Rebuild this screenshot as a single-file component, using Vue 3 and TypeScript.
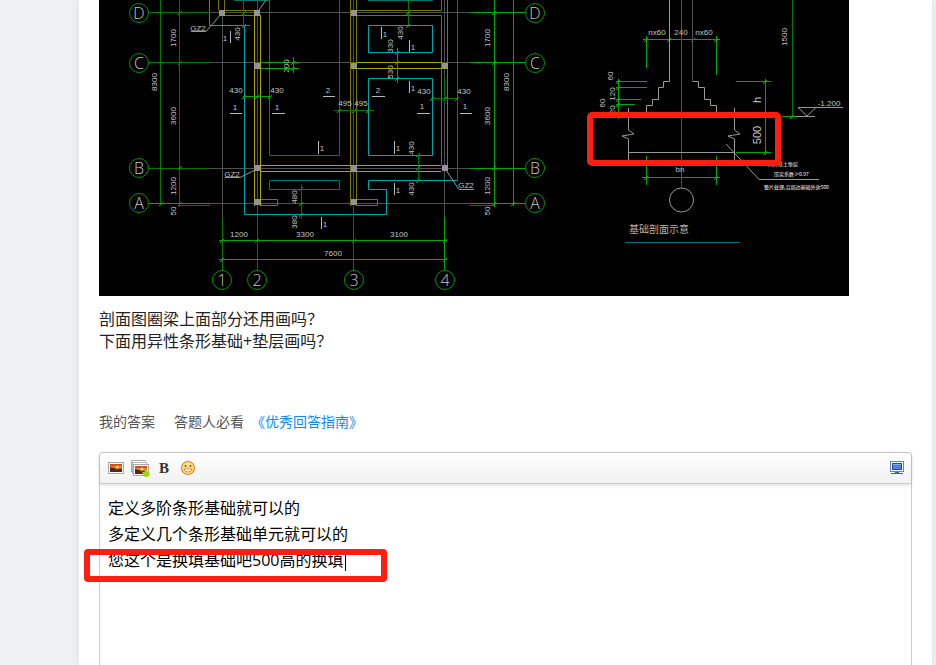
<script setup lang="ts">
import { ref } from 'vue'

type Label = [text: string, x: number, y: number]

const answer = ref('定义多阶条形基础就可以的\n多定义几个条形基础单元就可以的\n您这个是换填基础吧500高的换填')

const axisBubbles: Label[] = [
  ['D', 139, 13], ['C', 139, 63], ['B', 139, 168], ['A', 139, 203],
  ['D', 535, 13], ['C', 535, 63], ['B', 535, 168], ['A', 535, 203],
  ['1', 222, 280], ['2', 257, 280], ['3', 354, 280], ['4', 445, 280],
]

const columns: [number, number][] = [
  [222, 13], [257, 13], [354, 13], [257, 66], [354, 66], [445, 66],
  [257, 168], [354, 168], [445, 168], [257, 202], [354, 202],
]

const labels: Label[] = [
  ['1200', 239, 234], ['3300', 305, 234], ['3100', 399, 234], ['7600', 333, 253],
  ['GZ2', 198, 28], ['GZ2', 232, 174], ['GZ2', 466, 185],
  ['1', 225, 38], ['430', 236, 90], ['430', 277, 90], ['1', 235, 107], ['1', 277, 107],
  ['2', 328, 90], ['2', 378, 90], ['495', 345, 103], ['495', 361, 103],
  ['430', 424, 91], ['430', 464, 91], ['1', 422, 106], ['1', 465, 106],
  ['1', 385, 34], ['1', 413, 47], ['1', 413, 88], ['1', 322, 148], ['1', 398, 148],
  ['1', 398, 190], ['1', 325, 224],
  ['nx60', 657, 32], ['240', 681, 32], ['nx60', 704, 32], ['-1.200', 829, 103], ['bn', 680, 169],
]

const turnedLabels: Label[] = [
  ['1700', 173, 38], ['8300', 154, 82], ['3600', 173, 116], ['1200', 173, 186], ['50', 173, 211],
  ['1700', 487, 38], ['8300', 506, 82], ['3600', 487, 116], ['1200', 487, 186], ['50', 487, 211],
  ['430', 237, 34], ['200', 286, 66], ['430', 400, 33], ['330', 390, 46], ['530', 390, 72],
  ['430', 411, 148], ['430', 411, 189], ['480', 294, 197], ['380', 294, 222],
  ['60', 610, 76], ['120', 612, 94], ['60', 602, 103], ['120', 612, 112],
  ['1500', 784, 37],
]

const ticks: [number, number][] = [
  [180, 13], [180, 63], [180, 168], [180, 204], [161, 204],
  [494, 13], [494, 63], [494, 168], [494, 204], [513, 204],
  [222, 241], [257, 241], [354, 241], [445, 241], [222, 260], [445, 260],
  [244, 13], [244, 26], [244, 97], [257, 97], [270, 97], [293, 63], [293, 69],
  [339, 111], [354, 111], [368, 111], [432, 99], [445, 99], [457, 99],
  [397, 53], [397, 63], [397, 79], [408, 13], [408, 26], [418, 155], [418, 168], [418, 181],
  [301, 189], [301, 204], [301, 215],
  [646, 40], [669, 40], [693, 40], [716, 40], [618, 82], [618, 88], [618, 100], [618, 105],
  [765, 82], [765, 153], [792, 117], [646, 178], [716, 178],
]
</script>

<template>
  <main class="card">
    <svg class="drawing" viewBox="99 0 750 296" role="img" aria-label="基础平面图与基础剖面示意">
      <rect class="sheet" x="99" y="0" width="750" height="296" />

      <path class="axis" d="M210 12.5H470M210 62.5H470M210 168.5H470M210 203.5H470M222.500 13V217M257.500 0V217M353.500 0V217M444.500 0V217" />

      <path class="teal" d="M269.500 0V155.500H339.500V0M234 .5H270M368 .5H433M269.500 180.500H339.500V189.500H269.500ZM457.500 0V180.500" />
      <path class="cyan" d="M209.500 0V25.500H244.500V214.500H386.500V189.500H368.500V180.500H457.500M368.500 25.500H432.500V52.500H368.500ZM368.500 78.500H432.500V155.500H368.500Z" />

      <path class="wall" d="M218.500 0V10M224.500 0V10.500H254M224 15.500H254M254.500 15V206M260.500 15V206M350.500 0V206M356.500 0V206M441.500 0V10.500H357M357 15.500H441.500V165M447.500 0V165M261 165.500H441M261 171.500H441M261 199.500H277.500V205.500H261M357 199.500H377.500V205.500H357" />
      <path class="wall bright" d="M357 62.500H442M357 68.500H442M254.500 15V206M260.500 15V206M261 165.500H441M261 171.500H441" />

      <path class="green dim" d="M149 12.500H210M149 62.500H210M149 168.500H210M180 205.500H210M160.500 0V205M179.500 0V207M222.500 217V270M257.500 217V270M353.500 189V270M243.500 0V27M408.500 0V27M418.500 154V182M301.500 184V219M257.500 92V101M353.500 94V115M334 110.500H374M431 98.500H458M444.500 77V104M470 205.500H495M792.500 0V118" />
      <path class="green" d="M149 203.500H210M470 12.500H526M470 62.500H526M470 168.500H526M470 203.500H526M494.500 0V207M513.500 0V206M219 240.500H447M219 259.500H447M444.500 217V270M244 25.500H250M261 62.500H299M261 68.500H299M293.500 57V73M243 96.500H271M397.500 48V83" />
      <path class="green" d="M643 39.500H720M646.500 36V68M716.500 36V75M618.500 79V119M616 81.500H647M616 87.500H647M616 99.500H641M616 104.500H635M765.500 79V155M736 81.500H771M736 152.500H771M782 116.500H795M646.500 156V185M716.500 156V185M642 177.500H720" />
      <path v-for="([x, y], i) in ticks" :key="`t${i}`" class="green" :d="`M${x - 2} ${y + 2}L${x + 2} ${y - 2}`" />

      <path class="white" d="M230 113.500H242M272 113.500H285M323 96.500H335M372 96.500H385M417 113.500H430M460 113.500H472M381.500 27V39M409.500 40V52M409.500 81V93M318.500 141V154M394.500 141V154M394.500 183V195M321.500 217V229M230.500 31V43" />
      <path class="leader" d="M191 31.500H206L222 13M257 13L266 0M225 177.500H240L257 169M474 189.500H459L446 170" />

      <path class="axis" d="M681.500 0V188M692.500 0V81" />
      <path class="section" d="M669.500 0V81.500H663.500V87.500H658.500V99.500H652.500V105.500H646.500V114M692.500 81.500H698.500V87.500H704.500V99.500H710.500V105.500H716.500V114" />
      <path class="section" d="M628.500 108V130L634 134L622 136L628.500 139V160M734.500 108V130L740 134L728 136L734.500 139V160M628 152.500H735M726 144L759 179.500H819M798 107.500H843M798 107.500L807 116L816 107.500M795 116.500H815" />
      <circle class="section" cx="681.500" cy="200" r="12" />
      <path class="teal title-rule" d="M625 242.500H740" />

      <rect v-for="([x, y], i) in columns" :key="`c${i}`" class="column" :x="x - 3" :y="y - 3" width="6" height="6" />

      <g v-for="([text, x, y], i) in axisBubbles" :key="`b${i}`">
        <circle class="green bubble" :cx="x" :cy="y" r="9.500" />
        <text class="bubble-text" :x="x" :y="y + 6">{{ text }}</text>
      </g>
      <text v-for="([text, x, y], i) in labels" :key="`l${i}`" class="label" :x="x" :y="y + 3">{{ text }}</text>
      <text
        v-for="([text, x, y], i) in turnedLabels"
        :key="`r${i}`"
        class="label"
        :x="x"
        :y="y + 3"
        :transform="`rotate(-90 ${x} ${y})`"
      >{{ text }}</text>
      <text class="label large" x="757" y="104" transform="rotate(-90 757 100)">h</text>
      <text class="label large" x="757" y="139" transform="rotate(-90 757 135)">500</text>

      <text class="note" x="768" y="166">大开挖土垫层</text>
      <text class="note" x="774" y="176">压实系数≥0.97</text>
      <text class="note" x="764" y="189">整片处理,沿周边基础外放500</text>
      <text class="title" x="629" y="233">基础剖面示意</text>

      <rect class="mark" x="590" y="115" width="188" height="48" rx="2" />
    </svg>

    <p class="question">剖面图圈梁上面部分还用画吗？<br />下面用异性条形基础+垫层画吗？</p>

    <div class="meta">
      <label for="answer">我的答案</label>
      <span class="must">答题人必看</span>
      <a href="#guide">《优秀回答指南》</a>
    </div>

    <section class="editor">
      <div class="toolbar">
        <button type="button" aria-label="插入图片">
          <svg width="16" height="12" viewBox="0 0 16 12">
            <rect x=".5" y=".5" width="15" height="11" fill="#fff" stroke="#a9a9a9" />
            <rect x="2" y="2" width="12" height="8" fill="#c9541b" />
            <path d="M2 4H14V6H2Z" fill="#e9822b" />
            <circle cx="9.500" cy="5" r="1.500" fill="#ffd872" />
            <path d="M2 5L6 6L8 7.500L14 7V10H2Z" fill="#5d2714" />
          </svg>
        </button>
        <button type="button" aria-label="批量插入图片">
          <svg width="20" height="18" viewBox="0 0 20 18">
            <path d="M1.500 13V1.500H16" fill="#fff" stroke="#aaa" />
            <rect x="2.500" y="3.500" width="14" height="11" fill="#fff" stroke="#b4b4b4" />
            <rect x="3.500" y="5.500" width="15" height="11" fill="#fff" stroke="#a9a9a9" />
            <rect x="5" y="7" width="12" height="8" fill="#c9541b" />
            <path d="M5 9H17V11H5Z" fill="#e9822b" />
            <circle cx="12" cy="10" r="1.500" fill="#ffd872" />
            <path d="M5 10L9 11L11 12.500L17 12V15H5Z" fill="#5d2714" />
            <path d="M14.500 11H17.500V13H19.500V16H17.500V18H14.500V16H12.500V13H14.500Z" fill="#9bd321" />
          </svg>
        </button>
        <button type="button" class="bold" aria-label="加粗">B</button>
        <button type="button" aria-label="表情">
          <svg width="16" height="16" viewBox="0 0 16 16">
            <circle cx="8" cy="8" r="6.500" fill="#ffdf8c" stroke="#d98a25" stroke-width="1.200" />
            <circle cx="5.500" cy="6" r="1" fill="#a34f0c" />
            <circle cx="10.500" cy="6" r="1" fill="#a34f0c" />
            <path d="M4 9H12Q11.500 12 8 12T4 9Z" fill="#fff" stroke="#c2752a" stroke-width=".8" />
          </svg>
        </button>
        <button type="button" class="screen" aria-label="全屏">
          <svg width="14" height="14" viewBox="0 0 14 14">
            <rect x=".5" y=".5" width="13" height="10" fill="#fff" stroke="#6a82b3" />
            <rect x="2" y="2" width="10" height="7" fill="#23479d" />
            <rect x="3" y="3" width="8" height="5" fill="#4d80e4" />
            <path d="M3 3H11V4H3Z" fill="#8caef4" />
            <path d="M5 11H9V12H5ZM1 12H13V13H1Z" fill="#4b5f96" />
          </svg>
        </button>
      </div>
      <textarea id="answer" v-model="answer" spellcheck="false"></textarea>
      <span class="caret"></span>
      <span class="highlight"></span>
    </section>
  </main>
</template>

<style>
body {
  background: #eff0f3;
}
</style>

<style scoped>
.card {
  display: flex;
  flex-direction: column;
  box-sizing: border-box;
  min-height: 100vh;
  margin: 0 4px 0 79px;
  padding: 0 20px;
  background: #fff;
  box-shadow: 0 0 8px rgba(0, 0, 0, 0.08);
  color: #222;
  font-family: "Open Sans", "Noto Sans CJK SC", sans-serif;
}

.drawing {
  display: block;
  width: 100%;
  max-width: 750px;
}

.drawing path,
.drawing circle {
  fill: none;
}

.axis { stroke: #505050; }
.teal { stroke: #007474; }
.cyan { stroke: #00a5ad; }
.wall { stroke: #777500; }
.wall.bright { stroke: #aaa700; }
.green { stroke: #00a800; }
.green.dim { stroke: #007800; }
.green.bubble { stroke: #009500; }
.white { stroke: #b8b8b8; }
.leader { stroke: #999; }
.section { stroke: #999; }
.column { fill: #969296; }

.label,
.bubble-text {
  fill: #c4c4c4;
  font-family: "Liberation Sans", sans-serif;
  font-size: 8px;
  text-anchor: middle;
}

.label.large {
  font-size: 11px;
}

.bubble-text {
  font-family: "Open Sans", sans-serif;
  font-size: 16px;
  font-weight: 300;
}

.note,
.title {
  fill: #fff;
  font-family: "Noto Sans CJK SC", sans-serif;
  font-size: 5px;
}

.title {
  fill: #b4b4b4;
  font-size: 10px;
}

.mark {
  fill: none;
  stroke: #ff1e10;
  stroke-width: 6px;
}

.question {
  margin: 12px 0 0;
  font-size: 16px;
  line-height: 22px;
}

.meta {
  display: flex;
  margin: 60px 0 20px;
  color: #555;
  font-size: 14px;
  line-height: 20px;
}

.must {
  margin: 0 7px 0 19px;
}

.meta a {
  color: #1188fa;
  text-decoration: none;
}

.editor {
  position: relative;
  display: flex;
  flex: 1;
  flex-direction: column;
  border: 1px solid #ccc;
  border-bottom: 0;
  border-radius: 4px 4px 0 0;
}

.toolbar {
  display: flex;
  align-items: center;
  height: 30px;
  padding: 0 2px 0 4px;
  border-bottom: 1px solid #ccc;
  border-radius: 3px 3px 0 0;
  background: linear-gradient(#fff, #f1f1f1);
  box-shadow: 0 1px 4px rgba(0, 0, 0, 0.16);
}

.toolbar button {
  display: flex;
  align-items: center;
  justify-content: center;
  width: 24px;
  height: 24px;
  padding: 0;
  border: 0;
  background: none;
}

.toolbar .bold {
  color: #333;
  font: bold 15px "Liberation Serif", serif;
}

.toolbar .screen {
  margin-left: auto;
}

textarea {
  box-sizing: border-box;
  flex: 1;
  width: 100%;
  min-height: 180px;
  padding: 11px 8px 0;
  border: 0;
  outline: 0;
  resize: none;
  background: none;
  color: #000;
  font-family: inherit;
  font-size: 16px;
  line-height: 26px;
}

.caret {
  position: absolute;
  top: 98px;
  left: 245px;
  width: 1px;
  height: 20px;
  background: #000;
}

.highlight {
  position: absolute;
  top: 96px;
  left: -16px;
  box-sizing: border-box;
  width: 303px;
  height: 33px;
  border: 6px solid #ff1e10;
  border-radius: 4px;
  pointer-events: none;
}
</style>
